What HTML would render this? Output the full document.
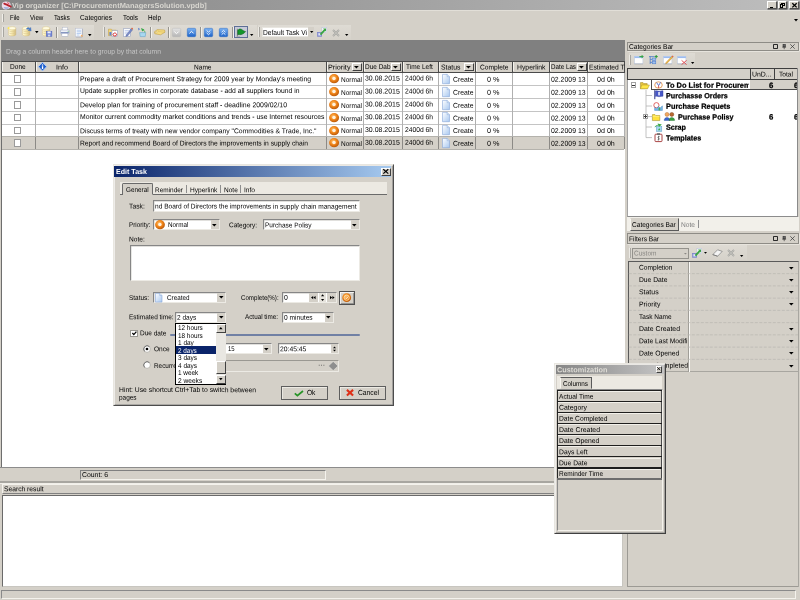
<!DOCTYPE html>
<html>
<head>
<meta charset="utf-8">
<title>Vip organizer</title>
<style>
html,body{margin:0;padding:0;background:#d4d0c8;}
body{width:800px;height:600px;overflow:hidden;position:relative;background:#d4d0c8;font-family:"Liberation Sans",sans-serif;font-size:7px;color:#000;}
.a{position:absolute;box-sizing:border-box;}
.t{position:absolute;white-space:nowrap;line-height:1;}
svg{position:absolute;overflow:visible;}
</style>
</head>
<body>
<div id="root" style="position:absolute;left:0;top:0;width:800px;height:600px;overflow:hidden;will-change:transform;filter:blur(0.3px);">
<div class="a" style="left:0px;top:0px;width:800px;height:10px;background:linear-gradient(to right,#858585,#bebebe);"></div>
<svg style="left:1.4px;top:0.8px" width="10.4" height="9" viewBox="0 0 10.4 9"><path d="M1 3.2C1 1 4 0.2 6 0.8C8.6 0.6 10.2 2.6 9.6 4.6C10 7 7 8.8 4.6 8.4C2 8.6 0.2 6 1 3.2Z" fill="#ecdcea"/><path d="M2.6 6.2C3.6 8.4 7 8.4 8 6.4Z" fill="#8aa4e0"/><path d="M3.2 2.6C5 3.2 7.4 4.4 9.8 5.6" stroke="#b8202c" stroke-width="1.7" fill="none" stroke-linecap="round"/><path d="M6.4 1.4L8.4 3.4" stroke="#e06070" stroke-width="1.2"/></svg>
<div class="t" style="left:12.30px;top:2px;font-size:7.3px;font-weight:bold;color:#d8d6d0;transform:translateY(0.01px) rotate(0.03deg) scaleX(1.0225);transform-origin:0 50%;">Vip organizer [C:\ProcurementManagersSolution.vpdb]</div>
<div class="a" style="left:767.3px;top:1.3px;width:9.7px;height:8px;background:#d4d0c8;border:1px solid;border-color:#fff #505050 #505050 #fff;box-shadow:0.5px 0.5px 0 #404040;"><div class="a" style="left:1.8px;top:4.4px;width:3.4px;height:1.2px;background:#000"></div></div>
<div class="a" style="left:777.5px;top:1.3px;width:9.7px;height:8px;background:#d4d0c8;border:1px solid;border-color:#fff #505050 #505050 #fff;box-shadow:0.5px 0.5px 0 #404040;"><div class="a" style="left:2.8px;top:0.5px;width:3.8px;height:3.2px;border:0.7px solid #000;border-top-width:1.1px"></div><div class="a" style="left:1.2px;top:2.2px;width:3.8px;height:3.2px;border:0.7px solid #000;border-top-width:1.1px;background:#d4d0c8"></div></div>
<div class="a" style="left:789px;top:1.3px;width:9.7px;height:8px;background:#d4d0c8;border:1px solid;border-color:#fff #505050 #505050 #fff;box-shadow:0.5px 0.5px 0 #404040;"><svg style="left:1.6px;top:0.7px" width="5" height="4.6" viewBox="0 0 5 4.6"><path d="M0.3 0.2L4.7 4.4M4.7 0.2L0.3 4.4" stroke="#000" stroke-width="1.3"/></svg></div>
<div class="a" style="left:0px;top:10px;width:800px;height:14.5px;background:#d4d0c8;border-top:1px solid #e2dfd8;"></div>
<div class="a" style="left:2.1px;top:14px;width:1.6px;height:7.6px;border-left:0.8px solid #f0eee9;border-right:0.8px solid #a6a49e;"></div>
<div class="t" style="left:9.75px;top:14px;font-size:7.3px;transform:translateY(0.41px) rotate(0.03deg) scaleX(0.8244);transform-origin:0 50%;">File</div>
<div class="t" style="left:29.75px;top:14px;font-size:7.3px;transform:translateY(0.41px) rotate(0.03deg) scaleX(0.8478);transform-origin:0 50%;">View</div>
<div class="t" style="left:54.00px;top:14px;font-size:7.3px;transform:translateY(0.41px) rotate(0.03deg) scaleX(0.8469);transform-origin:0 50%;">Tasks</div>
<div class="t" style="left:80.40px;top:14px;font-size:7.3px;transform:translateY(0.41px) rotate(0.03deg) scaleX(0.9066);transform-origin:0 50%;">Categories</div>
<div class="t" style="left:123.00px;top:14px;font-size:7.3px;transform:translateY(0.41px) rotate(0.03deg) scaleX(0.8799);transform-origin:0 50%;">Tools</div>
<div class="t" style="left:148.20px;top:14px;font-size:7.3px;transform:translateY(0.41px) rotate(0.03deg) scaleX(0.8658);transform-origin:0 50%;">Help</div>
<svg style="left:793.5px;top:19px" width="4" height="2.4" viewBox="0 0 4 2.4"><path d="M0 0H4L2 2.4Z" fill="#000"/></svg>
<div class="a" style="left:0px;top:24.5px;width:800px;height:16px;background:#d4d0c8;"></div>
<div class="a" style="left:1.5px;top:25px;width:92.0px;height:14.5px;background:linear-gradient(to bottom,#dedbd4,#d6d2ca);"></div>
<div class="a" style="left:102.5px;top:25px;width:154.0px;height:14.5px;background:linear-gradient(to bottom,#dedbd4,#d6d2ca);"></div>
<div class="a" style="left:257.5px;top:25px;width:93.0px;height:14.5px;background:linear-gradient(to bottom,#dedbd4,#d6d2ca);"></div>
<div class="a" style="left:2.2px;top:27px;width:1.7px;height:9.6px;border-left:0.8px solid #eceae5;border-right:0.9px solid #a8a6a0;"></div>
<svg style="left:7.1px;top:26.4px" width="11" height="11" viewBox="0 0 11 11"><defs><linearGradient id="cy" x1="0" x2="1"><stop offset="0" stop-color="#fffbe2"/><stop offset="0.5" stop-color="#f5e7ac"/><stop offset="1" stop-color="#d2ba7c"/></linearGradient></defs><path d="M1.4 2.2 V8.4 C1.4 10.4 8.8 10.4 8.8 8.4 V2.2 Z" fill="url(#cy)" stroke="#cdb87c" stroke-width="0.45"/><ellipse cx="5.1" cy="2.2" rx="3.7" ry="1.6" fill="#fffbe0" stroke="#d4c084" stroke-width="0.45"/><path d="M1.6 4.5 C2.4 6 7.8 6 8.6 4.5 M1.6 6.6 C2.4 8.1 7.8 8.1 8.6 6.6" stroke="#d8c488" stroke-width="0.5" fill="none"/><path d="M1.4 0.6L2 1.7L3.2 2L2 2.5L1.4 3.6L0.9 2.5L-0.2 2L0.9 1.7Z" fill="#ffe84a"/></svg>
<svg style="left:20.8px;top:26.4px" width="11" height="11" viewBox="0 0 11 11"><defs><linearGradient id="cy" x1="0" x2="1"><stop offset="0" stop-color="#fffbe2"/><stop offset="0.5" stop-color="#f5e7ac"/><stop offset="1" stop-color="#d2ba7c"/></linearGradient></defs><path d="M1.4 2.2 V8.4 C1.4 10.4 8.8 10.4 8.8 8.4 V2.2 Z" fill="url(#cy)" stroke="#cdb87c" stroke-width="0.45"/><ellipse cx="5.1" cy="2.2" rx="3.7" ry="1.6" fill="#fffbe0" stroke="#d4c084" stroke-width="0.45"/><path d="M1.6 4.5 C2.4 6 7.8 6 8.6 4.5 M1.6 6.6 C2.4 8.1 7.8 8.1 8.6 6.6" stroke="#d8c488" stroke-width="0.5" fill="none"/><path d="M5.4 3 C6 1.4 7.6 1 8.8 2.2 L9.8 1.4 L10.2 5 L7 4.4 L7.9 3.4 C7.4 2.8 6.8 2.8 6.4 3.4 Z" fill="#4f82cc" stroke="#3560a8" stroke-width="0.3"/></svg>
<svg style="left:34.6px;top:30.9px" width="3.6" height="2.2" viewBox="0 0 3.6 2.2"><path d="M0 0H3.6L1.8 2.2Z" fill="#000"/></svg>
<svg style="left:40.9px;top:26.4px" width="11" height="11" viewBox="0 0 11 11"><defs><linearGradient id="cy" x1="0" x2="1"><stop offset="0" stop-color="#fffbe2"/><stop offset="0.5" stop-color="#f5e7ac"/><stop offset="1" stop-color="#d2ba7c"/></linearGradient></defs><path d="M1.4 2.2 V8.4 C1.4 10.4 8.8 10.4 8.8 8.4 V2.2 Z" fill="url(#cy)" stroke="#cdb87c" stroke-width="0.45"/><ellipse cx="5.1" cy="2.2" rx="3.7" ry="1.6" fill="#fffbe0" stroke="#d4c084" stroke-width="0.45"/><path d="M1.6 4.5 C2.4 6 7.8 6 8.6 4.5 M1.6 6.6 C2.4 8.1 7.8 8.1 8.6 6.6" stroke="#d8c488" stroke-width="0.5" fill="none"/><rect x="5.3" y="5.2" width="5.6" height="5.2" fill="#7488d8" stroke="#4c5cb0" stroke-width="0.45"/><rect x="6.5" y="5.4" width="3.2" height="1.9" fill="#eef0fa"/><rect x="7" y="8.6" width="2.2" height="1.8" fill="#d0d6f0"/></svg>
<div class="a" style="left:55.6px;top:26.5px;width:1.5px;height:11.5px;border-left:0.8px solid #96948e;border-right:0.7px solid #f2f0ea;"></div>
<svg style="left:59.8px;top:27.4px" width="10" height="10" viewBox="0 0 10 10"><rect x="2.3" y="0.4" width="5" height="3" fill="#fff" stroke="#a8b2c8" stroke-width="0.4"/><rect x="0.5" y="3" width="8.8" height="4" rx="0.9" fill="#eef1f7" stroke="#8c9abc" stroke-width="0.45"/><rect x="1.9" y="6.2" width="6" height="3" fill="#fff" stroke="#9aa6c4" stroke-width="0.4"/><rect x="1" y="5.3" width="7.8" height="0.9" fill="#5a70a8"/><circle cx="8.2" cy="4.2" r="0.5" fill="#58b060"/></svg>
<svg style="left:75.3px;top:27.6px" width="9" height="10" viewBox="0 0 9 10"><rect x="0.6" y="0.5" width="6.6" height="8.4" fill="#fff" stroke="#b4bcd2" stroke-width="0.45"/><path d="M1.6 2.2H6.2M1.6 3.8H6.2M1.6 5.4H6.2M1.6 7H4.6" stroke="#a9c4ec" stroke-width="0.9"/><path d="M7.3 1V9H1" stroke="#8a92a8" stroke-width="0.5" fill="none"/><circle cx="6.8" cy="7.8" r="1.1" fill="#f0b070"/></svg>
<svg style="left:87.8px;top:34.2px" width="3.6" height="2.2" viewBox="0 0 3.6 2.2"><path d="M0 0H3.6L1.8 2.2Z" fill="#000"/></svg>
<div class="a" style="left:103.2px;top:27px;width:1.7px;height:9.6px;border-left:0.8px solid #eceae5;border-right:0.9px solid #a8a6a0;"></div>
<svg style="left:108px;top:27.3px" width="10" height="10" viewBox="0 0 10 10"><path d="M0.5 2.2H3.4L4.2 3.2H8.2V8.6H0.5Z" fill="#f5d878" stroke="#c09a38" stroke-width="0.5"/><rect x="4" y="3.6" width="5.4" height="5.8" fill="#fff" stroke="#8898c0" stroke-width="0.5"/><path d="M5 7.8 C5 5.4 8.6 5.4 8.6 7.8 C8.6 9.4 5 9.4 5 7.8" fill="none" stroke="#d83030" stroke-width="1"/><rect x="1.4" y="5" width="2" height="3.4" fill="#6080d0"/></svg>
<svg style="left:122.8px;top:27.3px" width="10" height="10" viewBox="0 0 10 10"><rect x="0.6" y="1.8" width="6.6" height="7.6" fill="#fff" stroke="#8898c0" stroke-width="0.5"/><path d="M1.6 3.6H6M1.6 5.2H5M1.6 6.8H4" stroke="#9ab0e0" stroke-width="0.6"/><path d="M3.2 8 L8.2 1.6 L9.6 2.8 L4.6 9 L2.8 9.4 Z" fill="#7a8cc8" stroke="#4a5a98" stroke-width="0.4"/><path d="M8.2 1.6 L9 0.6 L10 1.6 L9.6 2.8Z" fill="#e86030"/></svg>
<svg style="left:137.4px;top:27.3px" width="10" height="10" viewBox="0 0 10 10"><path d="M2.6 5.6H8.8L8.2 9.6H3.2Z" fill="#a8d8f0" stroke="#5a9cc8" stroke-width="0.5"/><path d="M4 1 L7.4 2.4 L5.2 4.6 Z" fill="#38a848"/><path d="M1 0.8 L3 2 L1.6 3.6Z" fill="#5078d0"/><path d="M5.5 3 C7 3 8 4 7.8 5.4" stroke="#38a848" stroke-width="0.8" fill="none"/></svg>
<div class="a" style="left:150.4px;top:26.5px;width:1.5px;height:11.5px;border-left:0.8px solid #96948e;border-right:0.7px solid #f2f0ea;"></div>
<svg style="left:153.8px;top:29.2px" width="11.4" height="6.4" viewBox="0 0 11.4 6.4"><path d="M0.4 2.8 L3.4 0.6 L10.6 1 L11 3.2 L6.6 5.8 L0.8 4.8 Z" fill="#f6dc80" stroke="#b89438" stroke-width="0.5"/><path d="M3.4 0.6 L4.6 2.6 L11 3.2" stroke="#caa850" stroke-width="0.4" fill="none"/><circle cx="2.2" cy="3.2" r="0.7" fill="#fff" stroke="#a07a20" stroke-width="0.3"/></svg>
<div class="a" style="left:168px;top:26.5px;width:1.5px;height:11.5px;border-left:0.8px solid #96948e;border-right:0.7px solid #f2f0ea;"></div>
<svg width="0" height="0" style="left:0;top:0"><defs><linearGradient id="bl" x1="0" y1="0" x2="0" y2="1"><stop offset="0" stop-color="#7db4f4"/><stop offset="1" stop-color="#1c62c8"/></linearGradient><linearGradient id="gr" x1="0" y1="0" x2="0" y2="1"><stop offset="0" stop-color="#e4e4e4"/><stop offset="1" stop-color="#b4b4b4"/></linearGradient></defs></svg>
<svg style="left:172px;top:28px" width="9" height="9" viewBox="0 0 9 9"><rect x="0.3" y="0.3" width="8.4" height="8.4" rx="1.2" fill="url(#gr)" stroke="#b8b8b8" stroke-width="0.5"/><path d="M2.4 3.6L4.5 5.7L6.6 3.6" stroke="#fff" stroke-width="1.0" fill="none"/></svg>
<svg style="left:187px;top:28px" width="9" height="9" viewBox="0 0 9 9"><rect x="0.3" y="0.3" width="8.4" height="8.4" rx="1.2" fill="url(#bl)" stroke="#2a68c0" stroke-width="0.5"/><path d="M2.4 5.4L4.5 3.3L6.6 5.4" stroke="#fff" stroke-width="1.0" fill="none"/></svg>
<div class="a" style="left:199.8px;top:26.5px;width:1.5px;height:11.5px;border-left:0.8px solid #96948e;border-right:0.7px solid #f2f0ea;"></div>
<svg style="left:204px;top:28px" width="9" height="9" viewBox="0 0 9 9"><rect x="0.3" y="0.3" width="8.4" height="8.4" rx="1.2" fill="url(#bl)" stroke="#2a68c0" stroke-width="0.5"/><path d="M2.6 2.4L4.5 4.2L6.4 2.4M2.6 4.9L4.5 6.7L6.4 4.9" stroke="#fff" stroke-width="0.9" fill="none"/></svg>
<svg style="left:218.7px;top:28px" width="9" height="9" viewBox="0 0 9 9"><rect x="0.3" y="0.3" width="8.4" height="8.4" rx="1.2" fill="url(#bl)" stroke="#2a68c0" stroke-width="0.5"/><path d="M2.6 4.2L4.5 2.4L6.4 4.2M2.6 6.7L4.5 4.9L6.4 6.7" stroke="#fff" stroke-width="0.9" fill="none"/></svg>
<div class="a" style="left:232px;top:26.5px;width:1.5px;height:11.5px;border-left:0.8px solid #96948e;border-right:0.7px solid #f2f0ea;"></div>
<div class="a" style="left:234.3px;top:25.7px;width:13.7px;height:12.6px;background:#c8ccd8;border:0.8px solid #5e6e96;"></div>
<svg style="left:236.3px;top:27.6px" width="10" height="9" viewBox="0 0 10 9"><path d="M1.4 0.8V8.6" stroke="#6a6a6a" stroke-width="0.8"/><path d="M1.8 2.6 C3 0.4 5 0.8 6.4 2 C7.6 3 8.6 3.4 9.6 3.6 C8.4 5 6.8 6.2 5 6.6 C3.6 6.8 2.6 6.2 1.8 6.6 Z" fill="#13962a" stroke="#0a5c18" stroke-width="0.55"/><path d="M0.6 8.4H4" stroke="#9a9a9a" stroke-width="0.6"/></svg>
<svg style="left:249.9px;top:34.1px" width="3.4" height="2.1" viewBox="0 0 3.4 2.1"><path d="M0 0H3.4L1.7 2.1Z" fill="#000"/></svg>
<div class="a" style="left:258.3px;top:27px;width:1.7px;height:9.6px;border-left:0.8px solid #eceae5;border-right:0.9px solid #a8a6a0;"></div>
<div class="a" style="left:261.8px;top:26.8px;width:52.6px;height:10.5px;background:#fff;border:0.6px solid #e8e6e0;"></div>
<div class="t" style="left:263.20px;top:28px;font-size:7.3px;transform:translateY(0.61px) rotate(0.03deg) scaleX(0.9090);transform-origin:0 50%;">Default Task Vi</div>
<div class="a" style="left:308.4px;top:27.3px;width:5.8px;height:9.6px;background:#d4d0c8;"></div>
<svg style="left:309.5px;top:30.8px" width="3.4" height="2" viewBox="0 0 3.4 2"><path d="M0 0H3.4L1.7 2Z" fill="#000"/></svg>
<svg style="left:317px;top:27.4px" width="10" height="10" viewBox="0 0 10 10"><rect x="0.4" y="5.2" width="4.4" height="4.2" fill="#8a94dc" stroke="#6670c0" stroke-width="0.4"/><rect x="1.4" y="6.2" width="2.4" height="2.2" fill="#e8eaf8"/><rect x="5" y="0.4" width="4.6" height="5" fill="#fff" stroke="#a8b4d8" stroke-width="0.45"/><path d="M3.4 7.6L7.8 2.8" stroke="#3aa444" stroke-width="1.9"/><path d="M6 1.6L9 1.6L9 4.8Z" fill="#3aa444"/></svg>
<svg style="left:332px;top:28.6px" width="8" height="8" viewBox="0 0 8 8"><path d="M1 1L7 7M7 1L1 7" stroke="#a8a8a4" stroke-width="1.8"/><path d="M1 1L7 7M7 1L1 7" stroke="#c4c4c0" stroke-width="0.7"/></svg>
<svg style="left:345px;top:34.1px" width="3.4" height="2.1" viewBox="0 0 3.4 2.1"><path d="M0 0H3.4L1.7 2.1Z" fill="#000"/></svg>
<div class="a" style="left:1px;top:40.1px;width:624px;height:21.1px;background:#808080;"></div>
<div class="t" style="left:5.60px;top:47px;font-size:7px;color:#c6c6c6;transform:translateY(0.71px) rotate(0.03deg) scaleX(0.9668);transform-origin:0 50%;">Drag a column header here to group by that column</div>
<div class="a" style="left:1px;top:61px;width:623.8px;height:406.7px;background:#fff;border-left:1.2px solid #6e6e6e;"></div>
<div class="a" style="left:1.5px;top:136.6px;width:622.7px;height:12.900000000000006px;background:#d4d0c8;"></div>
<div class="a" style="left:1.5px;top:84.9px;width:622.7px;height:1px;background:#c4c4c4;"></div>
<div class="a" style="left:1.5px;top:98.1px;width:622.7px;height:1px;background:#c4c4c4;"></div>
<div class="a" style="left:1.5px;top:110.9px;width:622.7px;height:1px;background:#c4c4c4;"></div>
<div class="a" style="left:1.5px;top:123.5px;width:622.7px;height:1px;background:#c4c4c4;"></div>
<div class="a" style="left:1.5px;top:136.1px;width:622.7px;height:1px;background:#b4b2ac;"></div>
<div class="a" style="left:1.5px;top:149.0px;width:622.7px;height:1px;background:#b4b2ac;"></div>
<div class="a" style="left:35.0px;top:72.6px;width:1px;height:64.0px;background:#b0b0b0;"></div>
<div class="a" style="left:35.0px;top:136.6px;width:1px;height:12.900000000000006px;background:#8c8a86;"></div>
<div class="a" style="left:78.1px;top:72.6px;width:1px;height:64.0px;background:#b0b0b0;"></div>
<div class="a" style="left:78.1px;top:136.6px;width:1px;height:12.900000000000006px;background:#8c8a86;"></div>
<div class="a" style="left:325.9px;top:72.6px;width:1px;height:64.0px;background:#b0b0b0;"></div>
<div class="a" style="left:325.9px;top:136.6px;width:1px;height:12.900000000000006px;background:#8c8a86;"></div>
<div class="a" style="left:362.9px;top:72.6px;width:1px;height:64.0px;background:#b0b0b0;"></div>
<div class="a" style="left:362.9px;top:136.6px;width:1px;height:12.900000000000006px;background:#8c8a86;"></div>
<div class="a" style="left:401.9px;top:72.6px;width:1px;height:64.0px;background:#b0b0b0;"></div>
<div class="a" style="left:401.9px;top:136.6px;width:1px;height:12.900000000000006px;background:#8c8a86;"></div>
<div class="a" style="left:438.3px;top:72.6px;width:1px;height:64.0px;background:#b0b0b0;"></div>
<div class="a" style="left:438.3px;top:136.6px;width:1px;height:12.900000000000006px;background:#8c8a86;"></div>
<div class="a" style="left:474.9px;top:72.6px;width:1px;height:64.0px;background:#b0b0b0;"></div>
<div class="a" style="left:474.9px;top:136.6px;width:1px;height:12.900000000000006px;background:#8c8a86;"></div>
<div class="a" style="left:512.1px;top:72.6px;width:1px;height:64.0px;background:#b0b0b0;"></div>
<div class="a" style="left:512.1px;top:136.6px;width:1px;height:12.900000000000006px;background:#8c8a86;"></div>
<div class="a" style="left:548.9px;top:72.6px;width:1px;height:64.0px;background:#b0b0b0;"></div>
<div class="a" style="left:548.9px;top:136.6px;width:1px;height:12.900000000000006px;background:#8c8a86;"></div>
<div class="a" style="left:587.0px;top:72.6px;width:1px;height:64.0px;background:#b0b0b0;"></div>
<div class="a" style="left:587.0px;top:136.6px;width:1px;height:12.900000000000006px;background:#8c8a86;"></div>
<div class="a" style="left:623.7px;top:72.6px;width:1px;height:64.0px;background:#b0b0b0;"></div>
<div class="a" style="left:623.7px;top:136.6px;width:1px;height:12.900000000000006px;background:#8c8a86;"></div>
<div class="a" style="left:1.5px;top:61px;width:622.7px;height:11.6px;background:#d4d0c8;border-top:1.2px solid #4a4a4a;border-bottom:1.2px solid #4a4a4a;"></div>
<div class="a" style="left:34.9px;top:61px;width:1.2px;height:11.6px;background:#4a4a4a;"></div>
<div class="a" style="left:78.0px;top:61px;width:1.2px;height:11.6px;background:#4a4a4a;"></div>
<div class="a" style="left:325.79999999999995px;top:61px;width:1.2px;height:11.6px;background:#4a4a4a;"></div>
<div class="a" style="left:362.79999999999995px;top:61px;width:1.2px;height:11.6px;background:#4a4a4a;"></div>
<div class="a" style="left:401.79999999999995px;top:61px;width:1.2px;height:11.6px;background:#4a4a4a;"></div>
<div class="a" style="left:438.2px;top:61px;width:1.2px;height:11.6px;background:#4a4a4a;"></div>
<div class="a" style="left:474.79999999999995px;top:61px;width:1.2px;height:11.6px;background:#4a4a4a;"></div>
<div class="a" style="left:512.0px;top:61px;width:1.2px;height:11.6px;background:#4a4a4a;"></div>
<div class="a" style="left:548.8px;top:61px;width:1.2px;height:11.6px;background:#4a4a4a;"></div>
<div class="a" style="left:586.9px;top:61px;width:1.2px;height:11.6px;background:#4a4a4a;"></div>
<div class="a" style="left:623.6px;top:61px;width:1.2px;height:11.6px;background:#4a4a4a;"></div>
<div class="a" style="left:2.1px;top:62.2px;width:0.7px;height:9.2px;background:#f4f2ec;"></div>
<div class="a" style="left:36.1px;top:62.2px;width:0.7px;height:9.2px;background:#f4f2ec;"></div>
<div class="a" style="left:79.19999999999999px;top:62.2px;width:0.7px;height:9.2px;background:#f4f2ec;"></div>
<div class="a" style="left:327.0px;top:62.2px;width:0.7px;height:9.2px;background:#f4f2ec;"></div>
<div class="a" style="left:364.0px;top:62.2px;width:0.7px;height:9.2px;background:#f4f2ec;"></div>
<div class="a" style="left:403.0px;top:62.2px;width:0.7px;height:9.2px;background:#f4f2ec;"></div>
<div class="a" style="left:439.40000000000003px;top:62.2px;width:0.7px;height:9.2px;background:#f4f2ec;"></div>
<div class="a" style="left:476.0px;top:62.2px;width:0.7px;height:9.2px;background:#f4f2ec;"></div>
<div class="a" style="left:513.2px;top:62.2px;width:0.7px;height:9.2px;background:#f4f2ec;"></div>
<div class="a" style="left:550.0px;top:62.2px;width:0.7px;height:9.2px;background:#f4f2ec;"></div>
<div class="a" style="left:588.1px;top:62.2px;width:0.7px;height:9.2px;background:#f4f2ec;"></div>
<div class="t" style="left:10.05px;top:63px;font-size:7.2px;transform:translateY(0.48px) rotate(0.03deg) scaleX(0.9135);transform-origin:0 50%;">Done</div>
<svg style="left:37.8px;top:62.4px" width="9" height="9.4" viewBox="0 0 9 9.4"><path d="M4.5 0.3L8.7 4.7L4.5 9.1L0.3 4.7Z" fill="#2060cc" stroke="#b4ccf2" stroke-width="1"/><rect x="3.9" y="2.4" width="1.3" height="1.2" fill="#fff"/><rect x="3.9" y="4.2" width="1.3" height="2.8" fill="#fff"/></svg>
<div class="t" style="left:56.00px;top:63px;font-size:7px;transform:translateY(0.41px) rotate(0.03deg) scaleX(1.0267);transform-origin:0 50%;">Info</div>
<div class="t" style="left:193.75px;top:63px;font-size:7px;transform:translateY(0.41px) rotate(0.03deg) scaleX(0.9365);transform-origin:0 50%;">Name</div>
<div class="t" style="left:328.00px;top:63px;font-size:7px;transform:translateY(0.41px) rotate(0.03deg) scaleX(1.0330);transform-origin:0 50%;">Priority</div>
<div class="a" style="left:352.0px;top:62.6px;width:9.5px;height:8.9px;background:#d4d0c8;border:0.8px solid;border-color:#fff #404040 #404040 #fff;"></div>
<svg style="left:354.3px;top:65.9px" width="4.8" height="2.6" viewBox="0 0 4.8 2.6"><path d="M0 0H4.8L2.4 2.6Z" fill="#000"/></svg>
<div class="t" style="left:365.00px;top:63px;font-size:7px;transform:translateY(0.41px) rotate(0.03deg) scaleX(0.9226);transform-origin:0 50%;">Due Dab</div>
<div class="a" style="left:391.0px;top:62.6px;width:9.5px;height:8.9px;background:#d4d0c8;border:0.8px solid;border-color:#fff #404040 #404040 #fff;"></div>
<svg style="left:393.3px;top:65.9px" width="4.8" height="2.6" viewBox="0 0 4.8 2.6"><path d="M0 0H4.8L2.4 2.6Z" fill="#000"/></svg>
<div class="t" style="left:406.30px;top:63px;font-size:7px;transform:translateY(0.41px) rotate(0.03deg) scaleX(0.9266);transform-origin:0 50%;">Time Left</div>
<div class="t" style="left:441.40px;top:63px;font-size:7px;transform:translateY(0.41px) rotate(0.03deg) scaleX(0.9819);transform-origin:0 50%;">Status</div>
<div class="a" style="left:464.0px;top:62.6px;width:9.5px;height:8.9px;background:#d4d0c8;border:0.8px solid;border-color:#fff #404040 #404040 #fff;"></div>
<svg style="left:466.3px;top:65.9px" width="4.8" height="2.6" viewBox="0 0 4.8 2.6"><path d="M0 0H4.8L2.4 2.6Z" fill="#000"/></svg>
<div class="t" style="left:479.75px;top:63px;font-size:7px;transform:translateY(0.41px) rotate(0.03deg) scaleX(0.9510);transform-origin:0 50%;">Complete</div>
<div class="t" style="left:516.75px;top:63px;font-size:7px;transform:translateY(0.41px) rotate(0.03deg) scaleX(0.9764);transform-origin:0 50%;">Hyperlink</div>
<div class="t" style="left:551.20px;top:63px;font-size:7px;transform:translateY(0.41px) rotate(0.03deg) scaleX(0.8919);transform-origin:0 50%;">Date Las</div>
<div class="a" style="left:577.0px;top:62.6px;width:9.5px;height:8.9px;background:#d4d0c8;border:0.8px solid;border-color:#fff #404040 #404040 #fff;"></div>
<svg style="left:579.3px;top:65.9px" width="4.8" height="2.6" viewBox="0 0 4.8 2.6"><path d="M0 0H4.8L2.4 2.6Z" fill="#000"/></svg>
<div class="t" style="left:589.00px;top:63px;font-size:7px;transform:translateY(0.41px) rotate(0.03deg) scaleX(0.9538);transform-origin:0 50%;">Estimated T</div>
<svg width="0" height="0" style="left:0;top:0"><defs><radialGradient id="og" cx="0.42" cy="0.38" r="0.62"><stop offset="0" stop-color="#ffc470"/><stop offset="0.55" stop-color="#f08418"/><stop offset="1" stop-color="#bc5a0a"/></radialGradient><linearGradient id="pg" x1="0" y1="0" x2="1" y2="1"><stop offset="0" stop-color="#fff"/><stop offset="1" stop-color="#a8c8f0"/></linearGradient></defs></svg>
<div class="a" style="left:14.3px;top:75.4px;width:7.2px;height:7.2px;background:#fff;border:0.9px solid #9a9a9a;"></div>
<div class="t" style="left:80.00px;top:75px;font-size:7px;transform:translateY(0.21px) rotate(0.03deg) scaleX(0.9814);transform-origin:0 50%;">Prepare a draft of Procurement Strategy for 2009 year by Monday's meeting</div>
<svg style="left:328.6px;top:74.2px" width="10.2" height="9.4" viewBox="0 0 10.2 9.4"><ellipse cx="5.1" cy="4.7" rx="5" ry="4.6" fill="url(#og)"/><ellipse cx="5" cy="4.5" rx="1.75" ry="1.65" fill="#fff2e0"/></svg>
<div class="t" style="left:340.80px;top:76px;font-size:7px;transform:translateY(0.01px) rotate(0.03deg) scaleX(0.9307);transform-origin:0 50%;">Normal</div>
<div class="t" style="left:364.60px;top:74px;font-size:7px;transform:translateY(0.61px) rotate(0.03deg) scaleX(0.9930);transform-origin:0 50%;">30.08.2015</div>
<div class="t" style="left:405.00px;top:74px;font-size:7px;transform:translateY(0.61px) rotate(0.03deg) scaleX(0.9588);transform-origin:0 50%;">2400d 6h</div>
<svg style="left:442.1px;top:73.6px" width="8" height="10.2" viewBox="0 0 8 10.2"><path d="M0.5 0.4H5.2L7.5 2.7V9.7H0.5Z" fill="url(#pg)" stroke="#86a6d8" stroke-width="0.6"/><path d="M5.2 0.4V2.7H7.5" fill="#e4eefc" stroke="#86a6d8" stroke-width="0.5"/></svg>
<div class="t" style="left:452.80px;top:75px;font-size:7px;transform:translateY(0.81px) rotate(0.03deg) scaleX(0.9755);transform-origin:0 50%;">Create</div>
<div class="t" style="left:487.00px;top:75px;font-size:7px;transform:translateY(0.81px) rotate(0.03deg) scaleX(1.0363);transform-origin:0 50%;">0 %</div>
<div class="t" style="left:550.80px;top:75px;font-size:7px;transform:translateY(0.81px) rotate(0.03deg) scaleX(0.9872);transform-origin:0 50%;">02.2009 13</div>
<div class="t" style="left:596.70px;top:75px;font-size:7px;transform:translateY(0.81px) rotate(0.03deg) scaleX(1.0153);transform-origin:0 50%;">0d 0h</div>
<div class="a" style="left:14.3px;top:88.4px;width:7.2px;height:7.2px;background:#fff;border:0.9px solid #9a9a9a;"></div>
<div class="t" style="left:80.00px;top:87px;font-size:7px;transform:translateY(0.01px) rotate(0.03deg) scaleX(0.9675);transform-origin:0 50%;">Update supplier profiles in corporate database - add all suppliers found in</div>
<svg style="left:328.6px;top:87.2px" width="10.2" height="9.4" viewBox="0 0 10.2 9.4"><ellipse cx="5.1" cy="4.7" rx="5" ry="4.6" fill="url(#og)"/><ellipse cx="5" cy="4.5" rx="1.75" ry="1.65" fill="#fff2e0"/></svg>
<div class="t" style="left:340.80px;top:89px;font-size:7px;transform:translateY(0.01px) rotate(0.03deg) scaleX(0.9307);transform-origin:0 50%;">Normal</div>
<div class="t" style="left:364.60px;top:87px;font-size:7px;transform:translateY(0.61px) rotate(0.03deg) scaleX(0.9930);transform-origin:0 50%;">30.08.2015</div>
<div class="t" style="left:405.00px;top:87px;font-size:7px;transform:translateY(0.61px) rotate(0.03deg) scaleX(0.9588);transform-origin:0 50%;">2400d 6h</div>
<svg style="left:442.1px;top:86.6px" width="8" height="10.2" viewBox="0 0 8 10.2"><path d="M0.5 0.4H5.2L7.5 2.7V9.7H0.5Z" fill="url(#pg)" stroke="#86a6d8" stroke-width="0.6"/><path d="M5.2 0.4V2.7H7.5" fill="#e4eefc" stroke="#86a6d8" stroke-width="0.5"/></svg>
<div class="t" style="left:452.80px;top:88px;font-size:7px;transform:translateY(0.81px) rotate(0.03deg) scaleX(0.9755);transform-origin:0 50%;">Create</div>
<div class="t" style="left:487.00px;top:88px;font-size:7px;transform:translateY(0.81px) rotate(0.03deg) scaleX(1.0363);transform-origin:0 50%;">0 %</div>
<div class="t" style="left:550.80px;top:88px;font-size:7px;transform:translateY(0.81px) rotate(0.03deg) scaleX(0.9872);transform-origin:0 50%;">02.2009 13</div>
<div class="t" style="left:596.70px;top:88px;font-size:7px;transform:translateY(0.81px) rotate(0.03deg) scaleX(1.0153);transform-origin:0 50%;">0d 0h</div>
<div class="a" style="left:14.3px;top:101.4px;width:7.2px;height:7.2px;background:#fff;border:0.9px solid #9a9a9a;"></div>
<div class="t" style="left:80.00px;top:101px;font-size:7px;transform:translateY(0.21px) rotate(0.03deg) scaleX(0.9875);transform-origin:0 50%;">Develop plan for training of procurement staff - deadline 2009/02/10</div>
<svg style="left:328.6px;top:100.2px" width="10.2" height="9.4" viewBox="0 0 10.2 9.4"><ellipse cx="5.1" cy="4.7" rx="5" ry="4.6" fill="url(#og)"/><ellipse cx="5" cy="4.5" rx="1.75" ry="1.65" fill="#fff2e0"/></svg>
<div class="t" style="left:340.80px;top:102px;font-size:7px;transform:translateY(0.01px) rotate(0.03deg) scaleX(0.9307);transform-origin:0 50%;">Normal</div>
<div class="t" style="left:364.60px;top:100px;font-size:7px;transform:translateY(0.61px) rotate(0.03deg) scaleX(0.9930);transform-origin:0 50%;">30.08.2015</div>
<div class="t" style="left:405.00px;top:100px;font-size:7px;transform:translateY(0.61px) rotate(0.03deg) scaleX(0.9588);transform-origin:0 50%;">2400d 6h</div>
<svg style="left:442.1px;top:99.6px" width="8" height="10.2" viewBox="0 0 8 10.2"><path d="M0.5 0.4H5.2L7.5 2.7V9.7H0.5Z" fill="url(#pg)" stroke="#86a6d8" stroke-width="0.6"/><path d="M5.2 0.4V2.7H7.5" fill="#e4eefc" stroke="#86a6d8" stroke-width="0.5"/></svg>
<div class="t" style="left:452.80px;top:101px;font-size:7px;transform:translateY(0.81px) rotate(0.03deg) scaleX(0.9755);transform-origin:0 50%;">Create</div>
<div class="t" style="left:487.00px;top:101px;font-size:7px;transform:translateY(0.81px) rotate(0.03deg) scaleX(1.0363);transform-origin:0 50%;">0 %</div>
<div class="t" style="left:550.80px;top:101px;font-size:7px;transform:translateY(0.81px) rotate(0.03deg) scaleX(0.9872);transform-origin:0 50%;">02.2009 13</div>
<div class="t" style="left:596.70px;top:101px;font-size:7px;transform:translateY(0.81px) rotate(0.03deg) scaleX(1.0153);transform-origin:0 50%;">0d 0h</div>
<div class="a" style="left:14.3px;top:114.10000000000001px;width:7.2px;height:7.2px;background:#fff;border:0.9px solid #9a9a9a;"></div>
<div class="t" style="left:80.00px;top:112px;font-size:7px;transform:translateY(0.91px) rotate(0.03deg) scaleX(0.9754);transform-origin:0 50%;">Monitor current commodity market conditions and trends - use Internet resources</div>
<svg style="left:328.6px;top:112.9px" width="10.2" height="9.4" viewBox="0 0 10.2 9.4"><ellipse cx="5.1" cy="4.7" rx="5" ry="4.6" fill="url(#og)"/><ellipse cx="5" cy="4.5" rx="1.75" ry="1.65" fill="#fff2e0"/></svg>
<div class="t" style="left:340.80px;top:114px;font-size:7px;transform:translateY(0.71px) rotate(0.03deg) scaleX(0.9307);transform-origin:0 50%;">Normal</div>
<div class="t" style="left:364.60px;top:113px;font-size:7px;transform:translateY(0.31px) rotate(0.03deg) scaleX(0.9930);transform-origin:0 50%;">30.08.2015</div>
<div class="t" style="left:405.00px;top:113px;font-size:7px;transform:translateY(0.31px) rotate(0.03deg) scaleX(0.9588);transform-origin:0 50%;">2400d 6h</div>
<svg style="left:442.1px;top:112.3px" width="8" height="10.2" viewBox="0 0 8 10.2"><path d="M0.5 0.4H5.2L7.5 2.7V9.7H0.5Z" fill="url(#pg)" stroke="#86a6d8" stroke-width="0.6"/><path d="M5.2 0.4V2.7H7.5" fill="#e4eefc" stroke="#86a6d8" stroke-width="0.5"/></svg>
<div class="t" style="left:452.80px;top:114px;font-size:7px;transform:translateY(0.51px) rotate(0.03deg) scaleX(0.9755);transform-origin:0 50%;">Create</div>
<div class="t" style="left:487.00px;top:114px;font-size:7px;transform:translateY(0.51px) rotate(0.03deg) scaleX(1.0363);transform-origin:0 50%;">0 %</div>
<div class="t" style="left:550.80px;top:114px;font-size:7px;transform:translateY(0.51px) rotate(0.03deg) scaleX(0.9872);transform-origin:0 50%;">02.2009 13</div>
<div class="t" style="left:596.70px;top:114px;font-size:7px;transform:translateY(0.51px) rotate(0.03deg) scaleX(1.0153);transform-origin:0 50%;">0d 0h</div>
<div class="a" style="left:14.3px;top:126.70000000000002px;width:7.2px;height:7.2px;background:#fff;border:0.9px solid #9a9a9a;"></div>
<div class="t" style="left:80.00px;top:127px;font-size:7px;transform:translateY(0.21px) rotate(0.03deg) scaleX(0.9714);transform-origin:0 50%;">Discuss terms of treaty with new vendor company "Commodities &amp; Trade, Inc."</div>
<svg style="left:328.6px;top:125.50000000000001px" width="10.2" height="9.4" viewBox="0 0 10.2 9.4"><ellipse cx="5.1" cy="4.7" rx="5" ry="4.6" fill="url(#og)"/><ellipse cx="5" cy="4.5" rx="1.75" ry="1.65" fill="#fff2e0"/></svg>
<div class="t" style="left:340.80px;top:127px;font-size:7px;transform:translateY(0.31px) rotate(0.03deg) scaleX(0.9307);transform-origin:0 50%;">Normal</div>
<div class="t" style="left:364.60px;top:125px;font-size:7px;transform:translateY(0.91px) rotate(0.03deg) scaleX(0.9930);transform-origin:0 50%;">30.08.2015</div>
<div class="t" style="left:405.00px;top:125px;font-size:7px;transform:translateY(0.91px) rotate(0.03deg) scaleX(0.9588);transform-origin:0 50%;">2400d 6h</div>
<svg style="left:442.1px;top:124.9px" width="8" height="10.2" viewBox="0 0 8 10.2"><path d="M0.5 0.4H5.2L7.5 2.7V9.7H0.5Z" fill="url(#pg)" stroke="#86a6d8" stroke-width="0.6"/><path d="M5.2 0.4V2.7H7.5" fill="#e4eefc" stroke="#86a6d8" stroke-width="0.5"/></svg>
<div class="t" style="left:452.80px;top:127px;font-size:7px;transform:translateY(0.11px) rotate(0.03deg) scaleX(0.9755);transform-origin:0 50%;">Create</div>
<div class="t" style="left:487.00px;top:127px;font-size:7px;transform:translateY(0.11px) rotate(0.03deg) scaleX(1.0363);transform-origin:0 50%;">0 %</div>
<div class="t" style="left:550.80px;top:127px;font-size:7px;transform:translateY(0.11px) rotate(0.03deg) scaleX(0.9872);transform-origin:0 50%;">02.2009 13</div>
<div class="t" style="left:596.70px;top:127px;font-size:7px;transform:translateY(0.11px) rotate(0.03deg) scaleX(1.0153);transform-origin:0 50%;">0d 0h</div>
<div class="a" style="left:14.3px;top:139.45000000000002px;width:7.2px;height:7.2px;background:#fff;border:0.9px solid #9a9a9a;"></div>
<div class="t" style="left:80.00px;top:139px;font-size:7px;transform:translateY(0.41px) rotate(0.03deg) scaleX(0.9591);transform-origin:0 50%;">Report and recommend Board of Directors the improvements in supply chain</div>
<svg style="left:328.6px;top:138.25px" width="10.2" height="9.4" viewBox="0 0 10.2 9.4"><ellipse cx="5.1" cy="4.7" rx="5" ry="4.6" fill="url(#og)"/><ellipse cx="5" cy="4.5" rx="1.75" ry="1.65" fill="#fff2e0"/></svg>
<div class="t" style="left:340.80px;top:140px;font-size:7px;transform:translateY(0.06px) rotate(0.03deg) scaleX(0.9307);transform-origin:0 50%;">Normal</div>
<div class="t" style="left:364.60px;top:138px;font-size:7px;transform:translateY(0.66px) rotate(0.03deg) scaleX(0.9930);transform-origin:0 50%;">30.08.2015</div>
<div class="t" style="left:405.00px;top:138px;font-size:7px;transform:translateY(0.66px) rotate(0.03deg) scaleX(0.9588);transform-origin:0 50%;">2400d 6h</div>
<svg style="left:442.1px;top:137.65px" width="8" height="10.2" viewBox="0 0 8 10.2"><path d="M0.5 0.4H5.2L7.5 2.7V9.7H0.5Z" fill="url(#pg)" stroke="#86a6d8" stroke-width="0.6"/><path d="M5.2 0.4V2.7H7.5" fill="#e4eefc" stroke="#86a6d8" stroke-width="0.5"/></svg>
<div class="t" style="left:452.80px;top:139px;font-size:7px;transform:translateY(0.86px) rotate(0.03deg) scaleX(0.9755);transform-origin:0 50%;">Create</div>
<div class="t" style="left:487.00px;top:139px;font-size:7px;transform:translateY(0.86px) rotate(0.03deg) scaleX(1.0363);transform-origin:0 50%;">0 %</div>
<div class="t" style="left:550.80px;top:139px;font-size:7px;transform:translateY(0.86px) rotate(0.03deg) scaleX(0.9872);transform-origin:0 50%;">02.2009 13</div>
<div class="t" style="left:596.70px;top:139px;font-size:7px;transform:translateY(0.86px) rotate(0.03deg) scaleX(1.0153);transform-origin:0 50%;">0d 0h</div>
<div class="a" style="left:624.6px;top:61px;width:2.8px;height:12px;background:#d4d0c8;"></div>
<div class="a" style="left:624.5px;top:61px;width:0.9px;height:406.5px;background:#8e8e8e;"></div>
<div class="a" style="left:0px;top:467.4px;width:625.2px;height:14.2px;background:#d4d0c8;border-top:1px solid #8c8c8c;"></div>
<div class="a" style="left:80.4px;top:469.5px;width:245.8px;height:10.2px;background:#d4d0c8;border:0.8px solid;border-color:#808080 #f4f2ec #f4f2ec #808080;"></div>
<div class="t" style="left:82.20px;top:471px;font-size:7px;transform:translateY(0.11px) rotate(0.03deg) scaleX(0.9823);transform-origin:0 50%;">Count: 6</div>
<div class="a" style="left:0px;top:481.4px;width:625.2px;height:1.2px;background:#a8a6a0;"></div>
<div class="a" style="left:0px;top:482.6px;width:625.2px;height:0.8px;background:#f0eee8;"></div>
<div class="a" style="left:1.6px;top:483.6px;width:623px;height:10.4px;background:#d4d0c8;border:0.8px solid;border-color:#f4f2ec #808080 #808080 #f4f2ec;"></div>
<div class="t" style="left:4.00px;top:485px;font-size:7px;transform:translateY(0.21px) rotate(0.03deg) scaleX(0.9576);transform-origin:0 50%;">Search result</div>
<div class="a" style="left:2px;top:495.2px;width:621.4px;height:92px;background:#fff;border:1.2px solid;border-color:#6a6a6a #c8c6c0 #c8c6c0 #6a6a6a;"></div>
<div class="a" style="left:0px;top:588.6px;width:800px;height:11.4px;background:#d4d0c8;"></div>
<div class="a" style="left:0.8px;top:589.6px;width:795px;height:9.6px;background:#d4d0c8;border:0.8px solid;border-color:#8a8a8a #f4f2ec #f4f2ec #8a8a8a;"></div>
<div class="a" style="left:625.2px;top:40px;width:174.8px;height:548.6px;background:#d4d0c8;"></div>
<div class="a" style="left:627.4px;top:41.5px;width:171.2px;height:9.8px;background:#d4d0c8;border:0.8px solid #8e8c86;box-shadow:0.6px 0.6px 0 #f4f2ec;"></div>
<div class="t" style="left:628.80px;top:42px;font-size:7px;transform:translateY(0.91px) rotate(0.03deg) scaleX(0.9485);transform-origin:0 50%;">Categories Bar</div>
<div class="a" style="left:773.2px;top:43.9px;width:5px;height:5px;border:0.75px solid #2a2a2a;border-radius:0.8px;"></div>
<svg style="left:782px;top:43.699999999999996px" width="4.4" height="5.4" viewBox="0 0 4.4 5.4"><rect x="1" y="0.3" width="2.4" height="2.6" fill="#666" stroke="#222" stroke-width="0.5"/><path d="M0.3 3.2H4.1M2.2 3.2V5.2" stroke="#222" stroke-width="0.6"/></svg>
<svg style="left:790px;top:43.9px" width="5" height="5" viewBox="0 0 5 5"><path d="M0.3 0.3L4.7 4.7M4.7 0.3L0.3 4.7" stroke="#333" stroke-width="0.7"/></svg>
<div class="a" style="left:628.5px;top:52.5px;width:66px;height:14.5px;background:linear-gradient(to bottom,#dedbd4,#d6d2ca);"></div>
<div class="a" style="left:629.2px;top:55px;width:1.7px;height:9.8px;border-left:0.8px solid #eceae5;border-right:0.9px solid #a8a6a0;"></div>
<svg style="left:633.8px;top:55px" width="10.5" height="10" viewBox="0 0 10.5 10"><rect x="0.5" y="1.4" width="8.4" height="7.4" fill="#fff" stroke="#b8c6e0" stroke-width="0.5"/><rect x="0.5" y="1.4" width="8.4" height="1.7" fill="#9cbcf0"/><path d="M0.5 9H8.9" stroke="#a4a6ac" stroke-width="0.6"/><path d="M5.4 1.6H8.6" stroke="#36a446" stroke-width="1.1"/><path d="M7.6 -0.2L9.8 1.6L7.6 3.4Z" fill="#36a446"/></svg>
<svg style="left:647.6px;top:55px" width="10.5" height="10" viewBox="0 0 10.5 10"><path d="M1 1.6H6.4M2.2 1.6V9M2.2 4.4H4.4M2.2 7.4H4.4" stroke="#4a78c8" stroke-width="0.8" fill="none"/><rect x="4.2" y="3" width="3.6" height="2.6" fill="#9cc0f0" stroke="#4a78c8" stroke-width="0.5"/><rect x="4.2" y="6.2" width="3.6" height="2.6" fill="#9cc0f0" stroke="#4a78c8" stroke-width="0.5"/><path d="M8.2 0V3.2M6.6 1.6H9.8" stroke="#2a9a3a" stroke-width="1"/></svg>
<svg style="left:662.6px;top:55px" width="10.5" height="10" viewBox="0 0 10.5 10"><rect x="0.5" y="1.4" width="8.4" height="7.4" fill="#fff" stroke="#b8c6e0" stroke-width="0.5"/><rect x="0.5" y="1.4" width="8.4" height="1.7" fill="#9cbcf0"/><path d="M0.5 9H8.9" stroke="#a4a6ac" stroke-width="0.6"/><path d="M3 7.4L8.8 1.2L9.9 2.2L4.2 8.2L2.6 8.8Z" fill="#ecb848" stroke="#b07820" stroke-width="0.35"/><path d="M8.8 1.2L9.6 0.4L10.6 1.4L9.9 2.2Z" fill="#e05040"/></svg>
<svg style="left:677.2px;top:55px" width="10.5" height="10" viewBox="0 0 10.5 10"><rect x="0.5" y="1.4" width="8.4" height="7.4" fill="#fff" stroke="#b8c6e0" stroke-width="0.5"/><rect x="0.5" y="1.4" width="8.4" height="1.7" fill="#9cbcf0"/><path d="M0.5 9H8.9" stroke="#a4a6ac" stroke-width="0.6"/><path d="M4.6 5.4L9.6 9.6M9.6 5.4L4.6 9.6" stroke="#e03c3c" stroke-width="0.85"/></svg>
<svg style="left:691px;top:62.3px" width="3.3" height="2" viewBox="0 0 3.3 2"><path d="M0 0H3.3L1.65 2Z" fill="#000"/></svg>
<div class="a" style="left:627.4px;top:68px;width:171.4px;height:148.8px;background:#fff;border:1px solid;border-color:#3e3e3e #9a9a9a #8c8c8c #a4a4a4;"></div>
<div class="a" style="left:627.4px;top:68px;width:171px;height:12px;background:#d4d0c8;border:1px solid #3e3e3e;"></div>
<div class="a" style="left:749.6px;top:68px;width:1.1px;height:12px;background:#3e3e3e;"></div>
<div class="a" style="left:773.6px;top:68px;width:1.1px;height:12px;background:#3e3e3e;"></div>
<div class="t" style="left:752.00px;top:71px;font-size:6.8px;transform:translateY(0.54px) rotate(0.03deg) scaleX(1.0174);transform-origin:0 50%;">UnD...</div>
<div class="t" style="left:779.00px;top:71px;font-size:6.8px;transform:translateY(0.54px) rotate(0.03deg) scaleX(0.9750);transform-origin:0 50%;">Total</div>
<div class="a" style="left:750px;top:80px;width:48px;height:9.6px;background:#d4d0c8;"></div>
<div class="a" style="left:651px;top:80px;width:147.2px;height:10px;border:1px solid #4a4a4a;border-right:none;border-top:none;"></div>
<svg style="left:0;top:0" width="800" height="600"><path d="M646 90L646 137.6" stroke="#b2b2b2" stroke-width="0.8"/></svg>
<svg style="left:0;top:0" width="800" height="600"><path d="M646 95.5L652 95.5" stroke="#b2b2b2" stroke-width="0.8"/></svg>
<svg style="left:0;top:0" width="800" height="600"><path d="M646 106L652 106" stroke="#b2b2b2" stroke-width="0.8"/></svg>
<svg style="left:0;top:0" width="800" height="600"><path d="M646 116.6L652 116.6" stroke="#b2b2b2" stroke-width="0.8"/></svg>
<svg style="left:0;top:0" width="800" height="600"><path d="M646 127L652 127" stroke="#b2b2b2" stroke-width="0.8"/></svg>
<svg style="left:0;top:0" width="800" height="600"><path d="M646 137.6L652 137.6" stroke="#b2b2b2" stroke-width="0.8"/></svg>
<div class="a" style="left:630.6px;top:82.2px;width:5.6px;height:5.6px;background:#fff;border:0.8px solid #a2a2a2;"></div>
<div class="a" style="left:632.0px;top:84.6px;width:2.8px;height:0.8px;background:#3a3a3a;"></div>
<svg style="left:639.8px;top:81.8px" width="10" height="7.4" viewBox="0 0 10 7.4"><path d="M0.4 0.6H3L3.8 1.6H7.2V6.6H0.4Z" fill="#e8c440" stroke="#9c8420" stroke-width="0.5"/><path d="M1.8 3H9.4L7.6 6.8H0.4Z" fill="#ffe648" stroke="#a89028" stroke-width="0.5"/></svg>
<svg style="left:653.6px;top:80.8px" width="9" height="8" viewBox="0 0 9 8"><ellipse cx="4.5" cy="4" rx="3.8" ry="3.2" fill="#fff" stroke="#e08838" stroke-width="0.8"/><path d="M2.6 1.6L4.6 4.6L6.6 1.4" stroke="#4a68d0" stroke-width="0.9" fill="none"/><path d="M4.6 4.6V7" stroke="#c83030" stroke-width="0.8"/></svg>
<div class="t" style="left:666.20px;top:81px;font-size:7.5px;font-weight:bold;transform:translateY(0.78px) rotate(0.03deg) scaleX(0.9918);transform-origin:0 50%;clip-path:inset(0 2px 0 0);-webkit-text-stroke:0.25px #000;">To Do List for Procurem</div>
<div class="t" style="left:768.96px;top:81px;font-size:7.8px;font-weight:bold;transform:translateY(0.88px) rotate(0.03deg) scaleX(1.0000);transform-origin:0 50%;-webkit-text-stroke:0.25px #000;">6</div>
<div class="t" style="left:793.66px;top:81px;font-size:7.8px;font-weight:bold;transform:translateY(0.88px) rotate(0.03deg) scaleX(1.0000);transform-origin:0 50%;-webkit-text-stroke:0.25px #000;">6</div>
<svg style="left:654px;top:90.4px" width="10" height="9.4" viewBox="0 0 10 9.4"><path d="M0.8 0.2V9.2" stroke="#2a3488" stroke-width="1"/><path d="M1.4 1C3 0.2 4.6 1.6 6 1.2C7.2 0.9 8 0.6 9 0.8V6.2C7.8 6 7 6.4 6 6.6C4.4 7 3 5.8 1.4 6.4Z" fill="#4858c8" stroke="#2a3490" stroke-width="0.4"/><rect x="4.2" y="2" width="1.7" height="3.4" fill="#dfe4fb"/></svg>
<div class="t" style="left:666.20px;top:92px;font-size:7.5px;font-weight:bold;transform:translateY(0.18px) rotate(0.03deg) scaleX(0.9563);transform-origin:0 50%;-webkit-text-stroke:0.25px #000;">Purchasse Orders</div>
<svg style="left:653.4px;top:101.6px" width="10" height="9" viewBox="0 0 10 9"><circle cx="3.4" cy="3.2" r="2.6" fill="#fff" stroke="#d84040" stroke-width="0.8"/><path d="M1.6 8.4V5.4L3.4 6.8L5.4 4.4L7.2 6L9.4 3.8V8.4Z" fill="#78b8e8" stroke="#3878b8" stroke-width="0.4"/><rect x="5.6" y="5.6" width="1.6" height="2.8" fill="#48a858"/></svg>
<div class="t" style="left:666.20px;top:102px;font-size:7.5px;font-weight:bold;transform:translateY(0.78px) rotate(0.03deg) scaleX(0.9824);transform-origin:0 50%;-webkit-text-stroke:0.25px #000;">Purchase Requets</div>
<div class="a" style="left:642.8px;top:113.8px;width:5.6px;height:5.6px;background:#fff;border:0.8px solid #a2a2a2;"></div>
<div class="a" style="left:644.1999999999999px;top:116.19999999999999px;width:2.8px;height:0.8px;background:#3a3a3a;"></div>
<div class="a" style="left:645.1999999999999px;top:115.19999999999999px;width:0.8px;height:2.8px;background:#3a3a3a;"></div>
<svg style="left:651.8px;top:113.6px" width="8.6" height="7.2" viewBox="0 0 8.6 7.2"><path d="M0.4 0.6H3L3.8 1.5H7.8V6.6H0.4Z" fill="#ffe23c" stroke="#a08c24" stroke-width="0.55"/><path d="M0.7 2.3H7.5" stroke="#fff6a8" stroke-width="0.6"/></svg>
<svg style="left:664.4px;top:112.4px" width="11" height="8.6" viewBox="0 0 11 8.6"><circle cx="3" cy="2.4" r="2" fill="#f0a860" stroke="#a86020" stroke-width="0.4"/><path d="M0.2 8.4C0.2 4.6 5.8 4.6 5.8 8.4Z" fill="#3a68d0" stroke="#203c90" stroke-width="0.4"/><circle cx="7.8" cy="2.4" r="2" fill="#b86830" stroke="#703810" stroke-width="0.4"/><path d="M5 8.4C5 4.6 10.6 4.6 10.6 8.4Z" fill="#38a040" stroke="#1a6a28" stroke-width="0.4"/></svg>
<div class="t" style="left:678.30px;top:113px;font-size:7.5px;font-weight:bold;transform:translateY(0.38px) rotate(0.03deg) scaleX(0.9577);transform-origin:0 50%;-webkit-text-stroke:0.25px #000;">Purchase Polisy</div>
<div class="t" style="left:768.96px;top:113px;font-size:7.8px;font-weight:bold;transform:translateY(0.48px) rotate(0.03deg) scaleX(1.0000);transform-origin:0 50%;-webkit-text-stroke:0.25px #000;">6</div>
<div class="t" style="left:793.66px;top:113px;font-size:7.8px;font-weight:bold;transform:translateY(0.48px) rotate(0.03deg) scaleX(1.0000);transform-origin:0 50%;-webkit-text-stroke:0.25px #000;">6</div>
<svg style="left:654px;top:122.8px" width="9" height="8.6" viewBox="0 0 9 8.6"><rect x="2.4" y="3.6" width="5.4" height="4.8" fill="#a8d8f0" stroke="#5a9cc8" stroke-width="0.5"/><path d="M3.6 0.4L7.8 1.6L5 4Z" fill="#38a848"/><path d="M1 4.2C1.6 2.6 3 2 4.4 2.6" stroke="#38a848" stroke-width="0.9" fill="none"/><path d="M5.2 5L6.4 7.2L4 7.2Z" fill="#38a848"/></svg>
<div class="t" style="left:666.20px;top:123px;font-size:7.5px;font-weight:bold;transform:translateY(0.78px) rotate(0.03deg) scaleX(0.9588);transform-origin:0 50%;-webkit-text-stroke:0.25px #000;">Scrap</div>
<svg style="left:653.8px;top:133px" width="9" height="9" viewBox="0 0 9 9"><rect x="1" y="1.2" width="7" height="7.4" rx="0.8" fill="#fff" stroke="#a03030" stroke-width="0.9"/><rect x="3" y="0.2" width="3" height="1.8" fill="#707070"/><path d="M5.6 3.4C3.6 3.4 3.6 5 4.6 5.2C5.8 5.4 5.6 7 3.6 6.8M4.6 2.8V7.4" stroke="#404040" stroke-width="0.6" fill="none"/></svg>
<div class="t" style="left:666.20px;top:134px;font-size:7.5px;font-weight:bold;transform:translateY(0.38px) rotate(0.03deg) scaleX(0.9659);transform-origin:0 50%;-webkit-text-stroke:0.25px #000;">Templates</div>
<div class="a" style="left:797.4px;top:68px;width:1px;height:148.6px;background:#8a8a8a;"></div>
<div class="a" style="left:798.4px;top:68px;width:1.6px;height:148.6px;background:#d4d0c8;"></div>
<div class="a" style="left:627.4px;top:217.4px;width:171.4px;height:13.4px;background:#f2f0ea;"></div>
<div class="a" style="left:629.8px;top:218.2px;width:49px;height:12.8px;background:#d4d0c8;border:0.8px solid;border-color:#d4d0c8 #5a5a5a #5a5a5a #f8f6f0;"></div>
<div class="t" style="left:632.00px;top:220px;font-size:7px;transform:translateY(0.91px) rotate(0.03deg) scaleX(0.9378);transform-origin:0 50%;">Categories Bar</div>
<div class="t" style="left:681.20px;top:220px;font-size:7px;color:#808080;transform:translateY(0.91px) rotate(0.03deg) scaleX(0.9461);transform-origin:0 50%;">Note</div>
<div class="a" style="left:698px;top:220px;width:0.8px;height:8px;background:#909090;"></div>
<div class="a" style="left:627.4px;top:233.4px;width:171.2px;height:10.6px;background:#d4d0c8;border:0.8px solid #8e8c86;box-shadow:0.6px 0.6px 0 #f4f2ec;"></div>
<div class="t" style="left:628.80px;top:235px;font-size:7px;transform:translateY(0.21px) rotate(0.03deg) scaleX(0.9403);transform-origin:0 50%;">Filters Bar</div>
<div class="a" style="left:773.2px;top:236.20000000000002px;width:5px;height:5px;border:0.75px solid #2a2a2a;border-radius:0.8px;"></div>
<svg style="left:782px;top:236.00000000000003px" width="4.4" height="5.4" viewBox="0 0 4.4 5.4"><rect x="1" y="0.3" width="2.4" height="2.6" fill="#666" stroke="#222" stroke-width="0.5"/><path d="M0.3 3.2H4.1M2.2 3.2V5.2" stroke="#222" stroke-width="0.6"/></svg>
<svg style="left:790px;top:236.20000000000002px" width="5" height="5" viewBox="0 0 5 5"><path d="M0.3 0.3L4.7 4.7M4.7 0.3L0.3 4.7" stroke="#333" stroke-width="0.7"/></svg>
<div class="a" style="left:628.5px;top:245.4px;width:118px;height:14.6px;background:linear-gradient(to bottom,#dedbd4,#d6d2ca);"></div>
<div class="a" style="left:629.4px;top:248px;width:1.7px;height:9.8px;border-left:0.8px solid #eceae5;border-right:0.9px solid #a8a6a0;"></div>
<div class="a" style="left:632px;top:247.6px;width:57.4px;height:11px;background:#d4d0c8;border:0.8px solid #94928c;"></div>
<div class="t" style="left:634.00px;top:249px;font-size:7px;color:#8a8884;transform:translateY(0.61px) rotate(0.03deg) scaleX(0.9326);transform-origin:0 50%;">Custom</div>
<svg style="left:684px;top:252.6px" width="2.8" height="1.6" viewBox="0 0 2.8 1.6"><path d="M0 0H2.8L1.4 1.6Z" fill="#8a8884"/></svg>
<svg style="left:692px;top:248px" width="10" height="10" viewBox="0 0 10 10"><rect x="0.4" y="5.2" width="4.4" height="4.2" fill="#8a94dc" stroke="#6670c0" stroke-width="0.4"/><rect x="1.4" y="6.2" width="2.4" height="2.2" fill="#e8eaf8"/><rect x="5" y="0.4" width="4.6" height="5" fill="#fff" stroke="#a8b4d8" stroke-width="0.45"/><path d="M3.4 7.6L7.8 2.8" stroke="#3aa444" stroke-width="1.9"/><path d="M6 1.6L9 1.6L9 4.8Z" fill="#3aa444"/></svg>
<svg style="left:703.6px;top:252.4px" width="3" height="1.8" viewBox="0 0 3 1.8"><path d="M0 0H3L1.5 1.8Z" fill="#000"/></svg>
<svg style="left:711.6px;top:249px" width="11" height="8" viewBox="0 0 11 8"><path d="M0.8 5.6L5.6 0.8L10.2 2.4L5.6 7.2Z" fill="#f4f4f4" stroke="#6a6a6a" stroke-width="0.6"/><path d="M0.8 5.6L3.2 6.4L5.6 7.2" stroke="#6a6a6a" stroke-width="0.6" fill="none"/></svg>
<svg style="left:727px;top:249px" width="8" height="8" viewBox="0 0 8 8"><path d="M1 1L7 7M7 1L1 7" stroke="#a8a8a4" stroke-width="1.8"/><path d="M1 1L7 7M7 1L1 7" stroke="#c4c4c0" stroke-width="0.7"/></svg>
<svg style="left:739.6px;top:255.2px" width="3.3" height="2" viewBox="0 0 3.3 2"><path d="M0 0H3.3L1.65 2Z" fill="#000"/></svg>
<div class="a" style="left:627.6px;top:260.8px;width:171px;height:111.2px;background:#d4d0c8;border:1.2px solid;border-color:#5a5a5a #a8a6a0 #a8a6a0 #5a5a5a;"></div>
<div class="a" style="left:688.4px;top:262px;width:0.8px;height:109.6px;background:#a09e98;"></div>
<div class="a" style="left:689.2px;top:262px;width:0.9px;height:109.6px;background:#fbfaf7;"></div>
<div class="t" style="left:638.60px;top:263px;font-size:7px;transform:translateY(0.73px) rotate(0.03deg) scaleX(0.9457);transform-origin:0 50%;">Completion</div>
<svg style="left:789.1px;top:266.7222222222222px" width="4.6" height="2.5" viewBox="0 0 4.6 2.5"><path d="M0 0H4.6L2.3 2.5Z" fill="#000"/></svg>
<svg style="left:0;top:0" width="800" height="600"><path d="M628.8 273.64H798" stroke="#b8b6b0" stroke-width="0.7" stroke-dasharray="3 1.5"/></svg>
<div class="t" style="left:638.60px;top:275px;font-size:7px;transform:translateY(0.97px) rotate(0.03deg) scaleX(0.9635);transform-origin:0 50%;">Due Date</div>
<svg style="left:789.1px;top:278.96666666666664px" width="4.6" height="2.5" viewBox="0 0 4.6 2.5"><path d="M0 0H4.6L2.3 2.5Z" fill="#000"/></svg>
<svg style="left:0;top:0" width="800" height="600"><path d="M628.8 285.89H798" stroke="#b8b6b0" stroke-width="0.7" stroke-dasharray="3 1.5"/></svg>
<div class="t" style="left:638.60px;top:288px;font-size:7px;transform:translateY(0.22px) rotate(0.03deg) scaleX(0.9869);transform-origin:0 50%;">Status</div>
<svg style="left:789.1px;top:291.2111111111111px" width="4.6" height="2.5" viewBox="0 0 4.6 2.5"><path d="M0 0H4.6L2.3 2.5Z" fill="#000"/></svg>
<svg style="left:0;top:0" width="800" height="600"><path d="M628.8 298.13H798" stroke="#b8b6b0" stroke-width="0.7" stroke-dasharray="3 1.5"/></svg>
<div class="t" style="left:638.60px;top:300px;font-size:7px;transform:translateY(0.46px) rotate(0.03deg) scaleX(0.9825);transform-origin:0 50%;">Priority</div>
<svg style="left:789.1px;top:303.4555555555555px" width="4.6" height="2.5" viewBox="0 0 4.6 2.5"><path d="M0 0H4.6L2.3 2.5Z" fill="#000"/></svg>
<svg style="left:0;top:0" width="800" height="600"><path d="M628.8 310.38H798" stroke="#b8b6b0" stroke-width="0.7" stroke-dasharray="3 1.5"/></svg>
<div class="t" style="left:638.60px;top:312px;font-size:7px;transform:translateY(0.71px) rotate(0.03deg) scaleX(0.9310);transform-origin:0 50%;">Task Name</div>
<svg style="left:0;top:0" width="800" height="600"><path d="M628.8 322.62H798" stroke="#b8b6b0" stroke-width="0.7" stroke-dasharray="3 1.5"/></svg>
<div class="t" style="left:638.60px;top:324px;font-size:7px;transform:translateY(0.95px) rotate(0.03deg) scaleX(0.9846);transform-origin:0 50%;">Date Created</div>
<svg style="left:789.1px;top:327.9444444444444px" width="4.6" height="2.5" viewBox="0 0 4.6 2.5"><path d="M0 0H4.6L2.3 2.5Z" fill="#000"/></svg>
<svg style="left:0;top:0" width="800" height="600"><path d="M628.8 334.87H798" stroke="#b8b6b0" stroke-width="0.7" stroke-dasharray="3 1.5"/></svg>
<div class="t" style="left:638.60px;top:337px;font-size:7px;transform:translateY(0.20px) rotate(0.03deg) scaleX(0.9606);transform-origin:0 50%;">Date Last Modifi</div>
<svg style="left:789.1px;top:340.18888888888887px" width="4.6" height="2.5" viewBox="0 0 4.6 2.5"><path d="M0 0H4.6L2.3 2.5Z" fill="#000"/></svg>
<svg style="left:0;top:0" width="800" height="600"><path d="M628.8 347.11H798" stroke="#b8b6b0" stroke-width="0.7" stroke-dasharray="3 1.5"/></svg>
<div class="t" style="left:638.60px;top:349px;font-size:7px;transform:translateY(0.44px) rotate(0.03deg) scaleX(0.9698);transform-origin:0 50%;">Date Opened</div>
<svg style="left:789.1px;top:352.43333333333334px" width="4.6" height="2.5" viewBox="0 0 4.6 2.5"><path d="M0 0H4.6L2.3 2.5Z" fill="#000"/></svg>
<svg style="left:0;top:0" width="800" height="600"><path d="M628.8 359.36H798" stroke="#b8b6b0" stroke-width="0.7" stroke-dasharray="3 1.5"/></svg>
<div class="t" style="left:638.60px;top:361px;font-size:7px;transform:translateY(0.69px) rotate(0.03deg) scaleX(0.9685);transform-origin:0 50%;">Date Completed</div>
<svg style="left:789.1px;top:364.67777777777775px" width="4.6" height="2.5" viewBox="0 0 4.6 2.5"><path d="M0 0H4.6L2.3 2.5Z" fill="#000"/></svg>
<div class="a" style="left:626.8px;top:372px;width:1px;height:215px;background:#9c9a94;"></div>
<div class="a" style="left:626.8px;top:586px;width:172.4px;height:1px;background:#9c9a94;"></div>
<div class="a" style="left:798.4px;top:372px;width:0.8px;height:215px;background:#a8a6a0;"></div>
<div class="a" style="left:112.6px;top:164.4px;width:281.6px;height:241.8px;background:#d4d0c8;border:0.9px solid;border-color:#e8e6e0 #4c4c4c #4c4c4c #e8e6e0;box-shadow:inset 0.6px 0.6px 0 #fff, inset -0.6px -0.6px 0 #808080;"></div>
<div class="a" style="left:114.2px;top:166.2px;width:277.2px;height:10.6px;background:linear-gradient(to right,#0a246a,#a6caf0);"></div>
<div class="t" style="left:115.50px;top:167px;font-size:7.2px;font-weight:bold;color:#fff;transform:translateY(0.98px) rotate(0.03deg) scaleX(0.9866);transform-origin:0 50%;">Edit Task</div>
<div class="a" style="left:381.3px;top:167.5px;width:9.4px;height:8px;background:#d4d0c8;border:0.8px solid;border-color:#fff #404040 #404040 #fff;"></div>
<svg style="left:383.4px;top:169px" width="5.6" height="4.8" viewBox="0 0 5.6 4.8"><path d="M0.3 0.2L5.3 4.6M5.3 0.2L0.3 4.6" stroke="#000" stroke-width="1.15"/></svg>
<div class="a" style="left:119.6px;top:181.8px;width:267.6px;height:13px;background:#ece9e2;border-bottom:0.9px solid #6a6a6a;"></div>
<div class="a" style="left:122.2px;top:183.2px;width:30.6px;height:11.8px;background:#d4d0c8;border:0.9px solid;border-color:#6a6a6a #6a6a6a #d4d0c8 #6a6a6a;border-radius:1.5px 1.5px 0 0;"></div>
<div class="a" style="left:119.6px;top:193.5px;width:3px;height:0.9px;background:#6a6a6a;"></div>
<div class="t" style="left:126.00px;top:187px;font-size:6.9px;transform:translateY(0.17px) rotate(0.03deg) scaleX(0.9219);transform-origin:0 50%;">General</div>
<div class="t" style="left:155.40px;top:187px;font-size:6.9px;transform:translateY(0.17px) rotate(0.03deg) scaleX(0.9372);transform-origin:0 50%;">Reminder</div>
<div class="t" style="left:189.60px;top:187px;font-size:6.9px;transform:translateY(0.17px) rotate(0.03deg) scaleX(0.9536);transform-origin:0 50%;">Hyperlink</div>
<div class="t" style="left:224.00px;top:187px;font-size:6.9px;transform:translateY(0.17px) rotate(0.03deg) scaleX(0.9476);transform-origin:0 50%;">Note</div>
<div class="t" style="left:243.60px;top:187px;font-size:6.9px;transform:translateY(0.17px) rotate(0.03deg) scaleX(0.9565);transform-origin:0 50%;">Info</div>
<div class="a" style="left:186.2px;top:185.4px;width:0.7px;height:8px;background:#8e8e8e;"></div>
<div class="a" style="left:220.4px;top:185.4px;width:0.7px;height:8px;background:#8e8e8e;"></div>
<div class="a" style="left:240.2px;top:185.4px;width:0.7px;height:8px;background:#8e8e8e;"></div>
<div class="t" style="left:128.80px;top:203px;font-size:6.9px;transform:translateY(0.57px) rotate(0.03deg) scaleX(0.9817);transform-origin:0 50%;">Task:</div>
<div class="a" style="left:153px;top:200.4px;width:206.8px;height:11.2px;background:#fff;border:0.8px solid;border-color:#868686 #eceae4 #eceae4 #868686;box-shadow:inset 0.4px 0.4px 0 #c4c2bc;"></div>
<div class="t" style="left:155.40px;top:203px;font-size:6.9px;transform:translateY(0.57px) rotate(0.03deg) scaleX(0.9535);transform-origin:0 50%;">nd Board of Directors the improvements in supply chain management</div>
<div class="t" style="left:128.80px;top:222px;font-size:6.9px;transform:translateY(0.37px) rotate(0.03deg) scaleX(0.9161);transform-origin:0 50%;">Priority:</div>
<div class="a" style="left:153px;top:219px;width:66.8px;height:11.4px;background:#fff;border:0.8px solid;border-color:#868686 #eceae4 #eceae4 #868686;box-shadow:inset 0.4px 0.4px 0 #c4c2bc;"></div>
<svg style="left:154.6px;top:220px" width="10" height="9.4" viewBox="0 0 10 9.4"><ellipse cx="5" cy="4.7" rx="4.9" ry="4.6" fill="url(#og)"/><ellipse cx="4.9" cy="4.5" rx="1.75" ry="1.65" fill="#fff2e0"/></svg>
<div class="t" style="left:167.60px;top:222px;font-size:6.9px;transform:translateY(0.37px) rotate(0.03deg) scaleX(0.9181);transform-origin:0 50%;">Normal</div>
<div class="a" style="left:210.6px;top:220.4px;width:8px;height:8.6px;background:#d4d0c8;"></div>
<svg style="left:212.29999999999998px;top:223.50000000000003px" width="4.6" height="2.6" viewBox="0 0 4.6 2.6"><path d="M0 0H4.6L2.3 2.6Z" fill="#000"/></svg>
<div class="t" style="left:228.60px;top:222px;font-size:6.9px;transform:translateY(0.37px) rotate(0.03deg) scaleX(0.9372);transform-origin:0 50%;">Category:</div>
<div class="a" style="left:263.2px;top:219px;width:96.6px;height:11.4px;background:#fff;border:0.8px solid;border-color:#868686 #eceae4 #eceae4 #868686;box-shadow:inset 0.4px 0.4px 0 #c4c2bc;"></div>
<div class="t" style="left:265.20px;top:222px;font-size:6.9px;transform:translateY(0.37px) rotate(0.03deg) scaleX(0.9432);transform-origin:0 50%;">Purchase Polisy</div>
<div class="a" style="left:350.6px;top:220.4px;width:8px;height:8.6px;background:#d4d0c8;"></div>
<svg style="left:352.3px;top:223.50000000000003px" width="4.6" height="2.6" viewBox="0 0 4.6 2.6"><path d="M0 0H4.6L2.3 2.6Z" fill="#000"/></svg>
<div class="t" style="left:128.80px;top:236px;font-size:6.9px;transform:translateY(0.57px) rotate(0.03deg) scaleX(0.9585);transform-origin:0 50%;">Note:</div>
<div class="a" style="left:129.6px;top:245.2px;width:230.2px;height:36px;background:#fff;border:0.8px solid;border-color:#868686 #eceae4 #eceae4 #868686;box-shadow:inset 0.4px 0.4px 0 #c4c2bc;"></div>
<div class="t" style="left:128.80px;top:294px;font-size:6.9px;transform:translateY(0.97px) rotate(0.03deg) scaleX(0.9323);transform-origin:0 50%;">Status:</div>
<div class="a" style="left:152.6px;top:292.2px;width:73.8px;height:10.8px;background:#fff;border:0.8px solid;border-color:#868686 #eceae4 #eceae4 #868686;box-shadow:inset 0.4px 0.4px 0 #c4c2bc;"></div>
<svg style="left:155.2px;top:292.8px" width="7.6" height="9.6" viewBox="0 0 7.6 9.6"><path d="M0.5 0.4H4.8L7 2.6V9.1H0.5Z" fill="url(#pg)" stroke="#86a6d8" stroke-width="0.6"/><path d="M4.8 0.4V2.6H7" fill="#e4eefc" stroke="#86a6d8" stroke-width="0.5"/></svg>
<div class="t" style="left:167.00px;top:294px;font-size:6.9px;transform:translateY(0.77px) rotate(0.03deg) scaleX(0.9137);transform-origin:0 50%;">Created</div>
<div class="a" style="left:217.4px;top:293.4px;width:8px;height:8.4px;background:#d4d0c8;"></div>
<svg style="left:219.1px;top:296.4px" width="4.6" height="2.6" viewBox="0 0 4.6 2.6"><path d="M0 0H4.6L2.3 2.6Z" fill="#000"/></svg>
<div class="t" style="left:240.60px;top:294px;font-size:6.9px;transform:translateY(0.97px) rotate(0.03deg) scaleX(0.8926);transform-origin:0 50%;">Complete(%):</div>
<div class="a" style="left:282.2px;top:292.2px;width:54.8px;height:10.8px;background:#fff;border:0.8px solid;border-color:#868686 #eceae4 #eceae4 #868686;box-shadow:inset 0.4px 0.4px 0 #c4c2bc;"></div>
<div class="t" style="left:284.40px;top:294px;font-size:6.9px;transform:translateY(0.77px) rotate(0.03deg) scaleX(1.0000);transform-origin:0 50%;">0</div>
<div class="a" style="left:309.2px;top:293.2px;width:27px;height:8.8px;background:#d4d0c8;"></div>
<svg style="left:310.6px;top:296px" width="4.6" height="3.2" viewBox="0 0 4.6 3.2"><path d="M2.2 0V3.2L0 1.6ZM4.6 0V3.2L2.4 1.6Z" fill="#000"/></svg>
<svg style="left:329.6px;top:296px" width="4.6" height="3.2" viewBox="0 0 4.6 3.2"><path d="M0 0V3.2L2.2 1.6ZM2.4 0V3.2L4.6 1.6Z" fill="#000"/></svg>
<div class="a" style="left:317.6px;top:293.2px;width:9.8px;height:8.8px;background:#e6e3dc;border-left:0.7px solid #fff;border-right:0.7px solid #fff;"></div>
<svg style="left:320.9px;top:294px" width="3.2" height="7.2" viewBox="0 0 3.2 7.2"><path d="M0 2.2H3.2L1.6 0.3ZM0 5H3.2L1.6 6.9Z" fill="#000"/></svg>
<div class="a" style="left:339.2px;top:290.6px;width:15.4px;height:14.4px;background:#d4d0c8;border:0.9px solid #505050;box-shadow:inset 0.7px 0.7px 0 #fff, inset -0.7px -0.7px 0 #808080;"></div>
<svg style="left:342.2px;top:293.2px" width="9.4" height="9.4" viewBox="0 0 9.4 9.4"><circle cx="4.7" cy="4.7" r="4.4" fill="url(#og)"/><circle cx="4.7" cy="4.7" r="2.6" fill="none" stroke="#ffe4b0" stroke-width="0.8"/><path d="M3.4 4.8L4.4 5.8L6.2 3.6" stroke="#fff" stroke-width="0.7" fill="none"/></svg>
<div class="t" style="left:128.80px;top:314px;font-size:6.9px;transform:translateY(0.17px) rotate(0.03deg) scaleX(0.9393);transform-origin:0 50%;">Estimated time:</div>
<div class="a" style="left:175.4px;top:312px;width:51px;height:10.8px;background:#fff;border:0.8px solid;border-color:#868686 #eceae4 #eceae4 #868686;box-shadow:inset 0.4px 0.4px 0 #c4c2bc;"></div>
<div class="t" style="left:177.40px;top:314px;font-size:6.9px;transform:translateY(0.77px) rotate(0.03deg) scaleX(0.9452);transform-origin:0 50%;">2 days</div>
<div class="a" style="left:217.4px;top:313.2px;width:8px;height:8.4px;background:#d4d0c8;"></div>
<svg style="left:219.1px;top:316.2px" width="4.6" height="2.6" viewBox="0 0 4.6 2.6"><path d="M0 0H4.6L2.3 2.6Z" fill="#000"/></svg>
<div class="t" style="left:244.60px;top:314px;font-size:6.9px;transform:translateY(0.17px) rotate(0.03deg) scaleX(0.9167);transform-origin:0 50%;">Actual time:</div>
<div class="a" style="left:282.2px;top:312px;width:51.4px;height:10.8px;background:#fff;border:0.8px solid;border-color:#868686 #eceae4 #eceae4 #868686;box-shadow:inset 0.4px 0.4px 0 #c4c2bc;"></div>
<div class="t" style="left:284.20px;top:314px;font-size:6.9px;transform:translateY(0.77px) rotate(0.03deg) scaleX(0.9573);transform-origin:0 50%;">0 minutes</div>
<div class="a" style="left:324.6px;top:313.2px;width:8px;height:8.4px;background:#d4d0c8;"></div>
<svg style="left:326.3px;top:316.2px" width="4.6" height="2.6" viewBox="0 0 4.6 2.6"><path d="M0 0H4.6L2.3 2.6Z" fill="#000"/></svg>
<div class="a" style="left:130.4px;top:330px;width:7.2px;height:7.2px;background:#fff;border:0.9px solid #9a9892;"></div>
<svg style="left:131.7px;top:331.4px" width="4.8" height="4.6" viewBox="0 0 4.8 4.6"><path d="M0.4 2L1.8 3.6L4.4 0.6" stroke="#000" stroke-width="1.3" fill="none"/></svg>
<div class="t" style="left:140.40px;top:330px;font-size:6.9px;transform:translateY(0.37px) rotate(0.03deg) scaleX(0.9439);transform-origin:0 50%;">Due date</div>
<div class="a" style="left:170px;top:334.3px;width:189.8px;height:2.1px;background:#7080a4;border-radius:1px;"></div>
<svg style="left:143.0px;top:344.8px" width="8" height="8" viewBox="0 0 8 8"><circle cx="4" cy="4" r="3.4" fill="#fff" stroke="#b4b2ac" stroke-width="0.9"/><path d="M1.6 6.4A3.4 3.4 0 0 1 6.4 1.6" fill="none" stroke="#6a6a6a" stroke-width="0.9"/><circle cx="4" cy="4" r="1.35" fill="#000"/></svg>
<div class="t" style="left:154.00px;top:346px;font-size:6.9px;transform:translateY(0.17px) rotate(0.03deg) scaleX(0.9464);transform-origin:0 50%;">Once</div>
<div class="a" style="left:175.4px;top:343.4px;width:96.2px;height:10.8px;background:#fff;border:0.8px solid;border-color:#868686 #eceae4 #eceae4 #868686;box-shadow:inset 0.4px 0.4px 0 #c4c2bc;"></div>
<div class="t" style="left:227.60px;top:346px;font-size:6.9px;transform:translateY(0.17px) rotate(0.03deg) scaleX(0.8603);transform-origin:0 50%;">15</div>
<div class="a" style="left:262.6px;top:344.6px;width:8px;height:8.4px;background:#d4d0c8;"></div>
<svg style="left:264.3px;top:347.6px" width="4.6" height="2.6" viewBox="0 0 4.6 2.6"><path d="M0 0H4.6L2.3 2.6Z" fill="#000"/></svg>
<div class="a" style="left:278px;top:343.4px;width:61.2px;height:10.8px;background:#fff;border:0.8px solid;border-color:#868686 #eceae4 #eceae4 #868686;box-shadow:inset 0.4px 0.4px 0 #c4c2bc;"></div>
<div class="t" style="left:280.20px;top:346px;font-size:6.9px;transform:translateY(0.17px) rotate(0.03deg) scaleX(0.9840);transform-origin:0 50%;">20:45:45</div>
<div class="a" style="left:330.6px;top:344.4px;width:7.8px;height:8.8px;background:#d4d0c8;"></div>
<svg style="left:333px;top:345.8px" width="3" height="6" viewBox="0 0 3 6"><path d="M0 2.2H3L1.5 0.4ZM0 3.8H3L1.5 5.6Z" fill="#000"/></svg>
<svg style="left:143.0px;top:361.2px" width="8" height="8" viewBox="0 0 8 8"><circle cx="4" cy="4" r="3.4" fill="#fff" stroke="#b4b2ac" stroke-width="0.9"/><path d="M1.6 6.4A3.4 3.4 0 0 1 6.4 1.6" fill="none" stroke="#6a6a6a" stroke-width="0.9"/></svg>
<div class="t" style="left:154.00px;top:362px;font-size:6.9px;transform:translateY(0.57px) rotate(0.03deg) scaleX(0.9263);transform-origin:0 50%;">Recurrence</div>
<div class="a" style="left:175.4px;top:359.8px;width:163.8px;height:11.8px;background:#d4d0c8;border:0.8px solid;border-color:#9a9892 #eceae4 #eceae4 #9a9892;"></div>
<div class="t" style="left:318.20px;top:361px;font-size:7.4px;color:#484848;transform:translateY(0.35px) rotate(0.03deg) scaleX(0.9471);transform-origin:0 50%;">···</div>
<svg style="left:327.6px;top:360.8px" width="10.4" height="10" viewBox="0 0 10.4 10"><path d="M5.2 0.4L10 5L5.2 9.6L0.4 5Z" fill="#8e8e8e" stroke="#e4e2dc" stroke-width="0.6"/></svg>
<div class="a" style="left:175.2px;top:323px;width:51.2px;height:61.6px;background:#fff;border:0.8px solid #000;"></div>
<div class="t" style="left:177.70px;top:324px;font-size:7px;color:#000;transform:translateY(0.27px) rotate(0.03deg) scaleX(0.9101);transform-origin:0 50%;">12 hours</div>
<div class="t" style="left:177.70px;top:331px;font-size:7px;color:#000;transform:translateY(0.80px) rotate(0.03deg) scaleX(0.9101);transform-origin:0 50%;">18 hours</div>
<div class="t" style="left:177.70px;top:339px;font-size:7px;color:#000;transform:translateY(0.32px) rotate(0.03deg) scaleX(0.9226);transform-origin:0 50%;">1 day</div>
<div class="a" style="left:176px;top:346.175px;width:40px;height:7.724999999999999px;background:#0a246a;"></div>
<div class="t" style="left:177.70px;top:346px;font-size:7px;color:#fff;transform:translateY(0.85px) rotate(0.03deg) scaleX(0.9115);transform-origin:0 50%;">2 days</div>
<div class="t" style="left:177.70px;top:354px;font-size:7px;color:#000;transform:translateY(0.37px) rotate(0.03deg) scaleX(0.9212);transform-origin:0 50%;">3 days</div>
<div class="t" style="left:177.70px;top:361px;font-size:7px;color:#000;transform:translateY(0.90px) rotate(0.03deg) scaleX(0.9212);transform-origin:0 50%;">4 days</div>
<div class="t" style="left:177.70px;top:369px;font-size:7px;color:#000;transform:translateY(0.42px) rotate(0.03deg) scaleX(0.9149);transform-origin:0 50%;">1 week</div>
<div class="t" style="left:177.70px;top:376px;font-size:7px;color:#000;transform:translateY(0.95px) rotate(0.03deg) scaleX(0.9421);transform-origin:0 50%;">2 weeks</div>
<div class="a" style="left:216.2px;top:323.8px;width:9.8px;height:60px;background:#e9e7e2;"></div>
<div class="a" style="left:216.4px;top:324px;width:9.6px;height:8.8px;background:#d4d0c8;border:0.8px solid;border-color:#fff #404040 #404040 #fff;"></div>
<svg style="left:219.4px;top:327.2px" width="3.6" height="2.2" viewBox="0 0 3.6 2.2"><path d="M0 2.2H3.6L1.8 0Z" fill="#000"/></svg>
<div class="a" style="left:216.4px;top:375.2px;width:9.6px;height:8.8px;background:#d4d0c8;border:0.8px solid;border-color:#fff #404040 #404040 #fff;"></div>
<svg style="left:219.4px;top:378.4px" width="3.6" height="2.2" viewBox="0 0 3.6 2.2"><path d="M0 0H3.6L1.8 2.2Z" fill="#000"/></svg>
<div class="a" style="left:216.4px;top:361.2px;width:9.6px;height:13px;background:#d4d0c8;border:0.8px solid;border-color:#fff #404040 #404040 #fff;"></div>
<div class="t" style="left:118.80px;top:387px;font-size:6.9px;transform:translateY(0.07px) rotate(0.03deg) scaleX(0.9841);transform-origin:0 50%;">Hint: Use shortcut Ctrl+Tab to switch between</div>
<div class="t" style="left:118.80px;top:394px;font-size:6.9px;transform:translateY(0.67px) rotate(0.03deg) scaleX(0.9371);transform-origin:0 50%;">pages</div>
<div class="a" style="left:281px;top:385.6px;width:46.8px;height:14px;background:#d4d0c8;border:0.9px solid #5e5e5e;box-shadow:inset 0.7px 0.7px 0 #f4f2ec;"></div>
<svg style="left:293.6px;top:389.8px" width="9.6" height="6.4" viewBox="0 0 9.6 6.4"><path d="M0.8 3.4L3.4 5.6L9 1" stroke="#289428" stroke-width="1.8" fill="none"/></svg>
<div class="t" style="left:306.60px;top:389px;font-size:7.4px;transform:translateY(0.05px) rotate(0.03deg) scaleX(0.8886);transform-origin:0 50%;">Ok</div>
<div class="a" style="left:338.6px;top:385.6px;width:47.2px;height:14px;background:#d4d0c8;border:0.9px solid #5e5e5e;box-shadow:inset 0.7px 0.7px 0 #f4f2ec;"></div>
<svg style="left:346.4px;top:389px" width="8" height="7.4" viewBox="0 0 8 7.4"><path d="M0.9 0.9L7.1 6.5M7.1 0.9L0.9 6.5" stroke="#de3018" stroke-width="2.1"/></svg>
<div class="t" style="left:358.00px;top:389px;font-size:7.4px;transform:translateY(0.05px) rotate(0.03deg) scaleX(0.9124);transform-origin:0 50%;">Cancel</div>
<div class="a" style="left:554px;top:362.8px;width:111.6px;height:171.4px;background:#d4d0c8;border:0.8px solid;border-color:#e8e6e0 #404040 #404040 #e8e6e0;box-shadow:inset 0.6px 0.6px 0 #fff, inset -0.6px -0.6px 0 #808080;"></div>
<div class="a" style="left:555.6px;top:365px;width:108.2px;height:8.8px;background:linear-gradient(to right,#858585,#c4c4c4);"></div>
<div class="t" style="left:556.80px;top:366px;font-size:7.4px;font-weight:bold;color:#dedcd6;transform:translateY(0.15px) rotate(0.03deg) scaleX(0.9937);transform-origin:0 50%;">Customization</div>
<div class="a" style="left:655.6px;top:365.8px;width:6.6px;height:6.8px;background:#d4d0c8;border:0.7px solid;border-color:#fff #404040 #404040 #fff;"></div>
<svg style="left:657.2px;top:367.4px" width="3.4" height="3.4" viewBox="0 0 3.4 3.4"><path d="M0.2 0.2L3.2 3.2M3.2 0.2L0.2 3.2" stroke="#000" stroke-width="0.8"/></svg>
<div class="a" style="left:556.6px;top:375.6px;width:105.6px;height:13px;background:#ece9e2;"></div>
<div class="a" style="left:559.8px;top:376.6px;width:32px;height:12.6px;background:#d4d0c8;border:0.9px solid;border-color:#5a5a5a #5a5a5a #d4d0c8 #f8f6f0;"></div>
<div class="t" style="left:562.80px;top:379px;font-size:7px;transform:translateY(0.61px) rotate(0.03deg) scaleX(0.9050);transform-origin:0 50%;">Columns</div>
<div class="a" style="left:556.8px;top:389px;width:105.8px;height:142.4px;background:#d4d0c8;border:0.8px solid;border-color:#8a8a8a #f4f2ec #f4f2ec #8a8a8a;"></div>
<div class="a" style="left:557.2px;top:389.6px;width:104.4px;height:90.0px;background:#d4d0c8;border-left:1.2px solid #262626;border-right:1.1px solid #4a4a4a;"></div>
<div class="a" style="left:557.2px;top:389.6px;width:104.4px;height:1.3px;background:#1e1e1e;"></div>
<div class="a" style="left:558.4px;top:390.9px;width:102px;height:0.7px;background:#f2f0ea;"></div>
<div class="a" style="left:557.2px;top:400.70000000000005px;width:104.4px;height:1.3px;background:#1e1e1e;"></div>
<div class="a" style="left:558.4px;top:402.0px;width:102px;height:0.7px;background:#f2f0ea;"></div>
<div class="a" style="left:557.2px;top:411.8px;width:104.4px;height:1.3px;background:#1e1e1e;"></div>
<div class="a" style="left:558.4px;top:413.09999999999997px;width:102px;height:0.7px;background:#f2f0ea;"></div>
<div class="a" style="left:557.2px;top:422.90000000000003px;width:104.4px;height:1.3px;background:#1e1e1e;"></div>
<div class="a" style="left:558.4px;top:424.2px;width:102px;height:0.7px;background:#f2f0ea;"></div>
<div class="a" style="left:557.2px;top:434.0px;width:104.4px;height:1.3px;background:#1e1e1e;"></div>
<div class="a" style="left:558.4px;top:435.29999999999995px;width:102px;height:0.7px;background:#f2f0ea;"></div>
<div class="a" style="left:557.2px;top:445.1px;width:104.4px;height:1.3px;background:#1e1e1e;"></div>
<div class="a" style="left:558.4px;top:446.4px;width:102px;height:0.7px;background:#f2f0ea;"></div>
<div class="a" style="left:557.2px;top:456.20000000000005px;width:104.4px;height:1.3px;background:#1e1e1e;"></div>
<div class="a" style="left:558.4px;top:457.5px;width:102px;height:0.7px;background:#f2f0ea;"></div>
<div class="a" style="left:557.2px;top:467.3px;width:104.4px;height:1.3px;background:#1e1e1e;"></div>
<div class="a" style="left:558.4px;top:468.59999999999997px;width:102px;height:0.7px;background:#f2f0ea;"></div>
<div class="a" style="left:557.2px;top:478.40000000000003px;width:104.4px;height:1.3px;background:#6e6e6e;"></div>
<div class="t" style="left:559.20px;top:392px;font-size:7px;transform:translateY(0.66px) rotate(0.03deg) scaleX(0.9405);transform-origin:0 50%;">Actual Time</div>
<div class="t" style="left:559.20px;top:403px;font-size:7px;transform:translateY(0.76px) rotate(0.03deg) scaleX(0.9857);transform-origin:0 50%;">Category</div>
<div class="t" style="left:559.20px;top:414px;font-size:7px;transform:translateY(0.86px) rotate(0.03deg) scaleX(0.9606);transform-origin:0 50%;">Date Completed</div>
<div class="t" style="left:559.20px;top:425px;font-size:7px;transform:translateY(0.96px) rotate(0.03deg) scaleX(0.9846);transform-origin:0 50%;">Date Created</div>
<div class="t" style="left:559.20px;top:437px;font-size:7px;transform:translateY(0.06px) rotate(0.03deg) scaleX(0.9698);transform-origin:0 50%;">Date Opened</div>
<div class="t" style="left:559.20px;top:448px;font-size:7px;transform:translateY(0.16px) rotate(0.03deg) scaleX(0.9669);transform-origin:0 50%;">Days Left</div>
<div class="t" style="left:559.20px;top:459px;font-size:7px;transform:translateY(0.26px) rotate(0.03deg) scaleX(0.9602);transform-origin:0 50%;">Due Date</div>
<div class="t" style="left:559.20px;top:470px;font-size:7px;transform:translateY(0.36px) rotate(0.03deg) scaleX(0.9269);transform-origin:0 50%;">Reminder Time</div>
</div>
</body>
</html>
